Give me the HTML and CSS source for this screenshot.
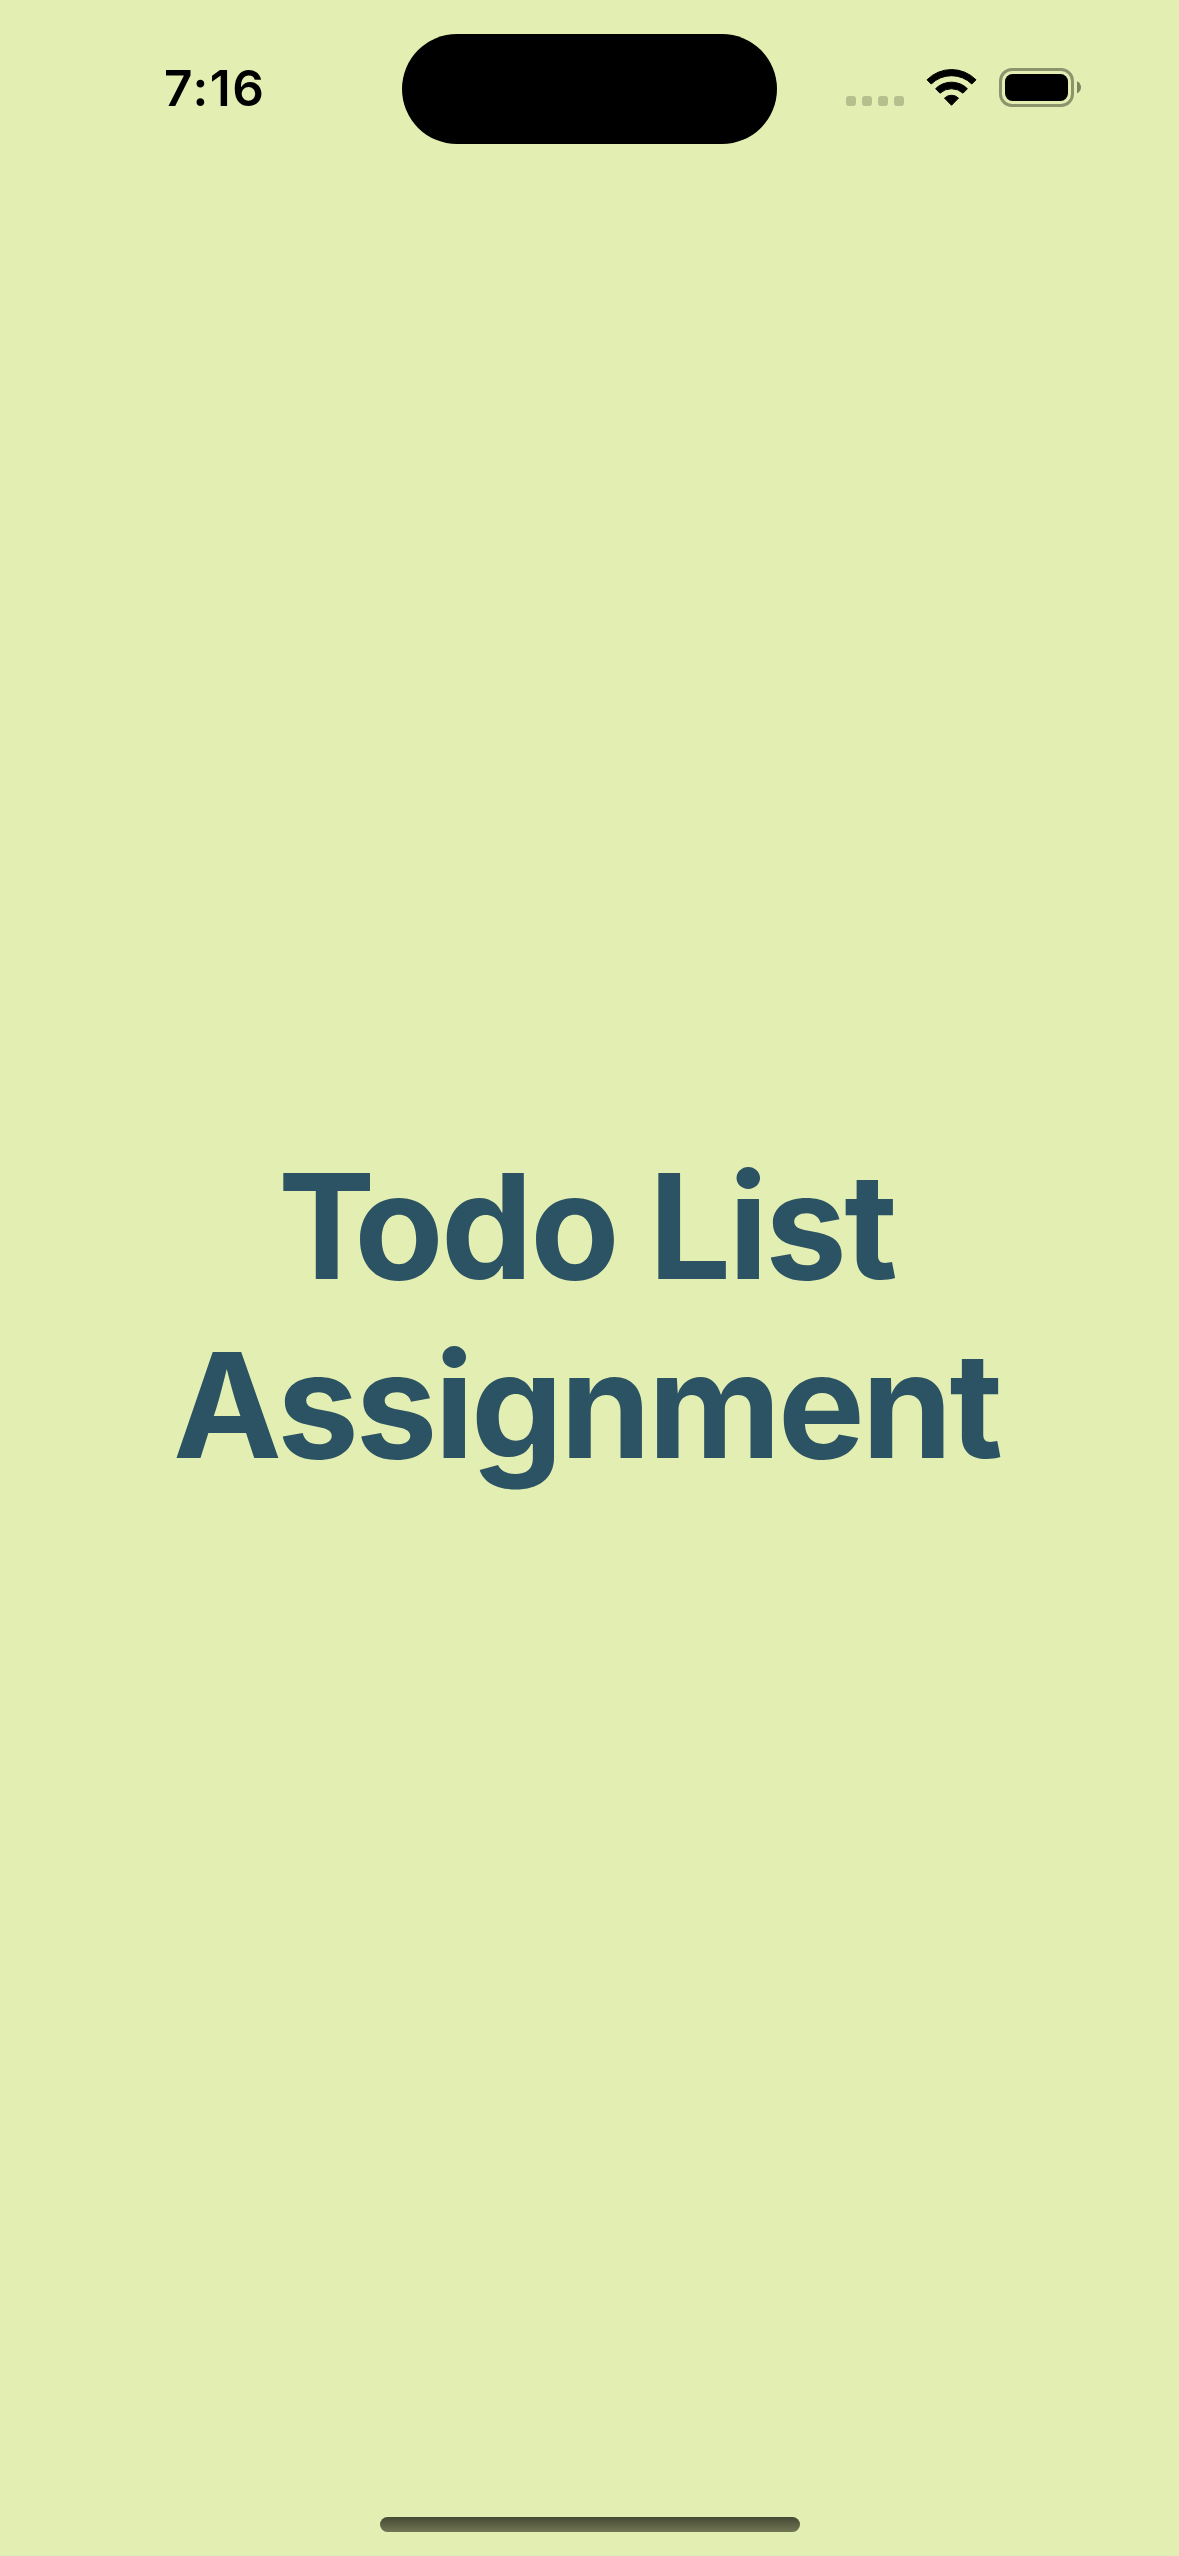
FILE: index.html
```html
<!DOCTYPE html>
<html lang="en">
<head>
<meta charset="utf-8">
<title>Todo List Assignment</title>
<link rel="stylesheet" href="styles.css">
</head>
<body>
<div class="screen">
  <header class="status-bar">
    <div class="status-left"><span class="time">7:16</span></div>
    <div class="island"></div>
    <div class="status-right">
      <div class="signal"><i class="dot"></i><i class="dot"></i><i class="dot"></i><i class="dot"></i></div>
      <svg class="wifi" width="51" height="40" viewBox="0 0 51 40">
        <path d="M1 11.8A34.4 34.4 0 0 1 50 11.8L45.8 16A29 29 0 0 0 5.2 16Z"/>
        <path d="M9.6 20.7A22.6 22.6 0 0 1 41.4 20.7L37 25.2A17 17 0 0 0 14 25.2Z"/>
        <path d="M18.5 30.1A10 10 0 0 1 32.5 30.1L25.5 37.3Z"/>
      </svg>
      <svg class="battery" width="82" height="39" viewBox="0 0 82 39">
        <rect class="battery-shell" x="1.5" y="1.5" width="72" height="36" rx="11.5"/>
        <rect x="6" y="6" width="63" height="27" rx="7.5"/>
        <path class="battery-cap" d="M78 13.2C80.5 14.2 82 16.7 82 19.3S80.5 24.4 78 25.4Z"/>
      </svg>
    </div>
  </header>
  <main class="splash">
    <h1 class="title"><span class="title-first"><span class="title-initial">T</span>odo List</span><br><span class="title-second">Assignment</span></h1>
  </main>
  <footer class="home"><div class="home-indicator"></div></footer>
</div>
</body>
</html>
```

FILE: styles.css
```css
* {
  box-sizing: border-box;
}

body {
  margin: 0;
  background: #e3efb2;
  font-family: Inter, "Liberation Sans", sans-serif;
}

.screen {
  display: flex;
  flex-direction: column;
  height: 2556px;
  background: #e3efb2;
}

.status-bar {
  display: grid;
  grid-template-columns: 402px 375px 402px;
  height: 177px;
  padding-top: 34px;
}

.status-left {
  padding: 24px 0 0 164px;
}

.time {
  display: block;
  color: #000;
  font-size: 49.5px;
  font-weight: 600;
  line-height: 60px;
  letter-spacing: 1.6px;
}

.island {
  height: 110px;
  border-radius: 55px;
  background: #000;
}

.status-right {
  display: flex;
  align-items: flex-start;
  padding: 34px 0 0 69px;
}

.signal {
  display: flex;
  gap: 6px;
  padding-top: 28px;
}

.dot {
  width: 10px;
  height: 10px;
  border-radius: 3px;
  background: #b6bf8e;
}

.wifi {
  margin-left: 22px;
  stroke: #000;
  stroke-width: 1;
  stroke-linejoin: round;
}

.battery {
  margin-left: 22px;
}

.battery-shell {
  fill: none;
  stroke: #8c946e;
  stroke-width: 3;
}

.battery-cap {
  fill: #7d8462;
}

.splash {
  flex: 1;
  display: flex;
  justify-content: center;
  align-items: flex-start;
  padding: 960px 6px 0 0;
}

.title {
  margin: 0;
  color: #2c5363;
  font-size: 145.8px;
  font-weight: 700;
  line-height: 179px;
  text-align: center;
  white-space: nowrap;
}

.title-first {
  letter-spacing: -2.7px;
}

.title-initial {
  letter-spacing: -21px;
}

.title-second {
  letter-spacing: -3px;
}

.home {
  display: flex;
  justify-content: center;
  padding-bottom: 24px;
}

.home-indicator {
  width: 420px;
  height: 15px;
  border-radius: 7.5px;
  background: linear-gradient(#464934, #717654);
}
```
